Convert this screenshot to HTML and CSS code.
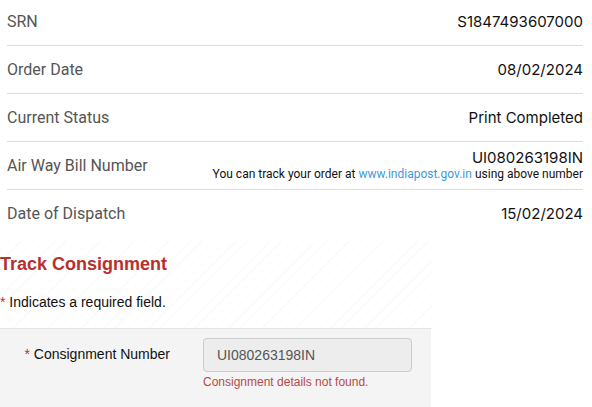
FILE: index.html
```html
<!DOCTYPE html>
<html>
<head>
<meta charset="utf-8">
<link rel="stylesheet" href="styles.css">
</head>
<body>
<div class="details">
  <div class="row first"><span class="label">SRN</span><span class="value">S1847493607000</span></div>
  <div class="row"><span class="label">Order Date</span><span class="value">08/02/2024</span></div>
  <div class="row"><span class="label">Current Status</span><span class="value">Print Completed</span></div>
  <div class="row"><span class="label">Air Way Bill Number</span>
    <div class="value-stack"><span class="value">UI080263198IN</span><span class="note">You can track your order at <a href="#">www.indiapost.gov.in</a> using above number</span></div>
  </div>
  <div class="row last"><span class="label">Date of Dispatch</span><span class="value">15/02/2024</span></div>
</div>
<div class="lower">
  <h2 class="title">Track Consignment</h2>
  <p class="required"><span class="star">*</span> Indicates a required field.</p>
  <div class="panel">
    <div class="field">
      <label class="flabel"><span class="star">*</span> Consignment Number</label>
      <div class="control">
        <input class="input" type="text" value="UI080263198IN" disabled>
        <span class="error">Consignment details not found.</span>
      </div>
    </div>
  </div>
</div>
</body>
</html>
```
FILE: styles.css
```css
html, body { margin: 0; padding: 0; background: #fff; }
body { width: 592px; height: 407px; overflow: hidden; }
.details { margin: -2px 9px 0 7px; font-family: Roboto, "Liberation Sans", sans-serif; }
.row { display: flex; justify-content: space-between; align-items: center; height: 47px; border-bottom: 1px solid #dedede; }
.row.last { border-bottom: none; }
.label { color: #555; font-size: 16px; }
.value { color: #111; font-size: 15px; font-family: Inter, Roboto, sans-serif; }
.value-stack { display: flex; flex-direction: column; align-items: flex-end; margin-top: -1px; }
.value-stack .value { line-height: 18px; }
.note { font-size: 12px; color: #111; line-height: 15px; font-family: Roboto, sans-serif; }
.note a { color: #3d9ad8; text-decoration: none; }
.lower { font-family: "Liberation Sans", Arial, sans-serif; margin-top: 4px;
  background: repeating-linear-gradient(-45deg, #fff 0 7px, #fafafa 7px 8px);
  background-size: 432px 100%; background-repeat: no-repeat; }
.title { margin: 0; padding-top: 12px; font-size: 18px; font-weight: bold; color: #b8302d; line-height: 22px; }
.required { margin: 18px 0 0; font-size: 14px; color: #111; line-height: 18px; }
.star { color: #b8302d; }
.panel { margin-top: 17px; width: 431px; height: 90px; background: #f4f4f4; border-top: 1px solid #e4e4e4; box-sizing: border-box; padding-top: 9px; }
.field { display: flex; }
.flabel { width: 180px; text-align: right; font-size: 14px; color: #111; padding-top: 8px; box-sizing: border-box; padding-right: 10px; }
.control { margin-left: 23px; display: flex; flex-direction: column; }
.input { width: 209px; height: 34px; box-sizing: border-box; border: 1px solid #cbcbcb; border-radius: 4px; background: #ededed; font: 14px "Liberation Sans", Arial, sans-serif; color: #555; padding: 0 13px; }
.error { margin-top: 3px; font-size: 12px; color: #b94a48; line-height: 15px; }
```
